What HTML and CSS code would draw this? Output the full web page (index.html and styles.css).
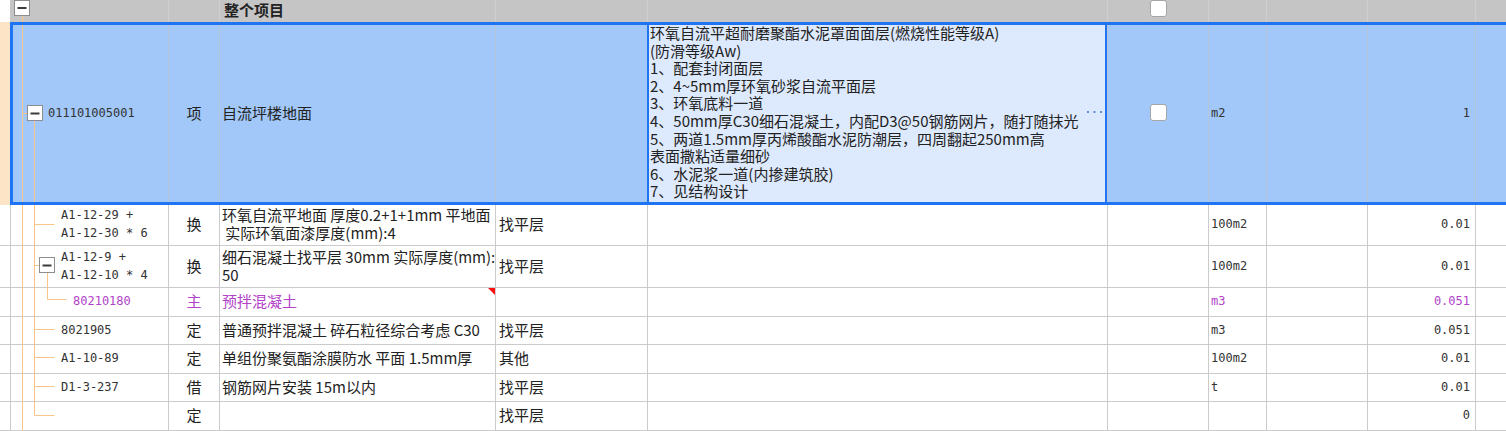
FILE: index.html
```html
<!DOCTYPE html>
<html lang="zh-CN">
<head>
<meta charset="utf-8">
<title>整个项目</title>
<link rel="stylesheet" href="styles.css">
</head>
<body>
<div class="sheet">
  <div class="row head">
    <div class="c c0"></div>
    <div class="c c1"></div>
    <div class="c c2"></div>
    <div class="c c3"><span class="title">整个项目</span></div>
    <div class="c c4"></div>
    <div class="c c5"></div>
    <div class="c c6"><span class="chk"></span></div>
    <div class="c c7"></div>
    <div class="c c8"></div>
    <div class="c c9"></div>
    <div class="c c10"></div>
  </div>

  <div class="row sel r1">
    <div class="c c0"></div>
    <div class="c c1 lv0"><span class="code">011101005001</span></div>
    <div class="c c2">项</div>
    <div class="c c3">自流坪楼地面</div>
    <div class="c c4"></div>
    <div class="c c5 desc-cell">
      <div class="desc">
        <div class="ln">环氧自流平超耐磨聚酯水泥罩面面层(燃烧性能等级A)</div>
        <div class="ln">(防滑等级Aw)</div>
        <div class="ln">1、配套封闭面层</div>
        <div class="ln">2、4~5mm厚环氧砂浆自流平面层</div>
        <div class="ln">3、环氧底料一道</div>
        <div class="ln">4、50mm厚C30细石混凝土，内配D3@50钢筋网片，随打随抹光</div>
        <div class="ln">5、两道1.5mm厚丙烯酸酯水泥防潮层，四周翻起250mm高</div>
        <div class="ln">表面撒粘适量细砂</div>
        <div class="ln">6、水泥浆一道(内掺建筑胶)</div>
        <div class="ln">7、见结构设计</div>
      </div>
      <svg class="more" width="15" height="3" viewBox="0 0 15 3"><rect x="0" y="0" width="2" height="2"/><rect x="6.5" y="0" width="2" height="2"/><rect x="13" y="0" width="2" height="2"/></svg>
    </div>
    <div class="c c6"><span class="chk"></span></div>
    <div class="c c7"><span class="num">m2</span></div>
    <div class="c c8"></div>
    <div class="c c9"><span class="num">1</span></div>
    <div class="c c10"></div>
  </div>

  <div class="row body r2">
    <div class="c c0"></div>
    <div class="c c1 lv1"><span class="code">A1-12-29 +<br>A1-12-30 * 6</span></div>
    <div class="c c2">换</div>
    <div class="c c3"><span class="ml">环氧自流平地面 厚度0.2+1+1mm 平地面<br>&nbsp;实际环氧面漆厚度(mm):4</span></div>
    <div class="c c4">找平层</div>
    <div class="c c5"></div>
    <div class="c c6"></div>
    <div class="c c7"><span class="num">100m2</span></div>
    <div class="c c8"></div>
    <div class="c c9"><span class="num">0.01</span></div>
    <div class="c c10"></div>
  </div>

  <div class="row body r3">
    <div class="c c0"></div>
    <div class="c c1 lv1"><span class="code">A1-12-9 +<br>A1-12-10 * 4</span></div>
    <div class="c c2">换</div>
    <div class="c c3"><span class="ml">细石混凝土找平层 30mm 实际厚度(mm):<br>50</span></div>
    <div class="c c4">找平层</div>
    <div class="c c5"></div>
    <div class="c c6"></div>
    <div class="c c7"><span class="num">100m2</span></div>
    <div class="c c8"></div>
    <div class="c c9"><span class="num">0.01</span></div>
    <div class="c c10"></div>
  </div>

  <div class="row body r4 pur">
    <div class="c c0"></div>
    <div class="c c1 lv2"><span class="code">80210180</span></div>
    <div class="c c2">主</div>
    <div class="c c3 flag">预拌混凝土</div>
    <div class="c c4"></div>
    <div class="c c5"></div>
    <div class="c c6"></div>
    <div class="c c7"><span class="num">m3</span></div>
    <div class="c c8"></div>
    <div class="c c9"><span class="num">0.051</span></div>
    <div class="c c10"></div>
  </div>

  <div class="row body r5">
    <div class="c c0"></div>
    <div class="c c1 lv1"><span class="code">8021905</span></div>
    <div class="c c2">定</div>
    <div class="c c3">普通预拌混凝土 碎石粒径综合考虑 C30</div>
    <div class="c c4">找平层</div>
    <div class="c c5"></div>
    <div class="c c6"></div>
    <div class="c c7"><span class="num">m3</span></div>
    <div class="c c8"></div>
    <div class="c c9"><span class="num">0.051</span></div>
    <div class="c c10"></div>
  </div>

  <div class="row body r6">
    <div class="c c0"></div>
    <div class="c c1 lv1"><span class="code">A1-10-89</span></div>
    <div class="c c2">定</div>
    <div class="c c3">单组份聚氨酯涂膜防水 平面 1.5mm厚</div>
    <div class="c c4">其他</div>
    <div class="c c5"></div>
    <div class="c c6"></div>
    <div class="c c7"><span class="num">100m2</span></div>
    <div class="c c8"></div>
    <div class="c c9"><span class="num">0.01</span></div>
    <div class="c c10"></div>
  </div>

  <div class="row body r7">
    <div class="c c0"></div>
    <div class="c c1 lv1"><span class="code">D1-3-237</span></div>
    <div class="c c2">借</div>
    <div class="c c3">钢筋网片安装 15m以内</div>
    <div class="c c4">找平层</div>
    <div class="c c5"></div>
    <div class="c c6"></div>
    <div class="c c7"><span class="num">t</span></div>
    <div class="c c8"></div>
    <div class="c c9"><span class="num">0.01</span></div>
    <div class="c c10"></div>
  </div>

  <div class="row body r8">
    <div class="c c0"></div>
    <div class="c c1 lv1"></div>
    <div class="c c2">定</div>
    <div class="c c3"></div>
    <div class="c c4">找平层</div>
    <div class="c c5"></div>
    <div class="c c6"></div>
    <div class="c c7"></div>
    <div class="c c8"></div>
    <div class="c c9"><span class="num">0</span></div>
    <div class="c c10"></div>
  </div>

  <svg class="tree" width="170" height="431" viewBox="0 0 170 431">
    <g class="lines">
      <line x1="22.5" y1="16" x2="22.5" y2="431"/>
      <line x1="22.5" y1="113.5" x2="27.5" y2="113.5"/>
      <line x1="34.5" y1="121" x2="34.5" y2="415.5"/>
      <line x1="34.5" y1="224.5" x2="54.5" y2="224.5"/>
      <line x1="34.5" y1="265.5" x2="39.5" y2="265.5"/>
      <line x1="47.5" y1="273" x2="47.5" y2="299.5"/>
      <line x1="47.5" y1="299.5" x2="66.5" y2="299.5"/>
      <line x1="34.5" y1="329.5" x2="54.5" y2="329.5"/>
      <line x1="34.5" y1="357.5" x2="54.5" y2="357.5"/>
      <line x1="34.5" y1="386.5" x2="54.5" y2="386.5"/>
      <line x1="34.5" y1="415.5" x2="54.5" y2="415.5"/>
    </g>
    <g class="box">
      <rect x="14.5" y="0.5" width="15" height="15"/>
      <rect x="27.5" y="105.5" width="15" height="15"/>
      <rect x="39.5" y="257.5" width="15" height="15"/>
    </g>
    <g class="minus">
      <rect x="17.5" y="7" width="9" height="2"/>
      <rect x="30.5" y="112.5" width="9" height="2"/>
      <rect x="42.5" y="264.5" width="9" height="2"/>
    </g>
  </svg>
</div>
</body>
</html>
```

FILE: styles.css
```css
* { box-sizing: border-box; }
html, body { margin: 0; padding: 0; background: #fff; overflow: hidden; }
body {
  width: 1506px;
  height: 431px;
  font-family: "Noto Sans CJK SC", "Noto Sans", sans-serif;
  font-size: 15px;
  color: #222;
}
.sheet { position: relative; width: 1535px; }

.row {
  display: grid;
  grid-template-columns: 10px 158px 51px 276px 152px 460px 101px 58px 101px 108px 60px;
}
.c {
  display: flex;
  align-items: center;
  border-left: 1px solid #cbcbcb;
  overflow: hidden;
  white-space: nowrap;
  min-width: 0;
  line-height: 18px;
  padding-bottom: 2px;
}
.c0 { border-left: none; }

/* header */
.head { height: 22px; background: #c5c5c5; }
.head .c { align-items: flex-start; padding-bottom: 0; border-left-color: #cfcfcf; }
.head .c0 { background: #fff; }
.head .c1 { border-left: none; }
.title { font-weight: 700; padding-left: 2px; line-height: 20px; }

/* selected row */
.sel { position: relative; height: 183px; background: #a1c8f9; }
.sel::after {
  content: "";
  position: absolute;
  left: 10px;
  top: 0;
  right: 0;
  bottom: 0;
  border: 3px solid #1f74f4;
  border-right: none;
  z-index: 2;
  pointer-events: none;
}
.sel .c { border-left-color: #b6c6da; padding-bottom: 2px; }
.sel .c0 { background: #fde4c6; }
.desc-cell {
  background: #dde9fc;
  border-left: 2px solid #1f74f4 !important;
  border-right: 2px solid #1f74f4;
  padding-left: 1px;
}
.desc { align-self: flex-start; padding-top: 2px; }
.ln { height: 17.6px; line-height: 17.6px; }
.more { margin-left: auto; margin-right: 3px; fill: #5b8fd8; align-self: center; }

/* body rows */
.body { border-bottom: 1px solid #cbcbcb; background: #fff; }
.r2 { height: 41px; }
.r3 { height: 42px; }
.r4 { height: 29px; }
.r5 { height: 28px; }
.r6 { height: 29px; }
.r7 { height: 28px; }
.r8 { height: 29px; }

.pur, .pur .code, .pur .num { color: #b243c9; }

.c1.lv0 { padding-left: 37px; }
.c1.lv1 { padding-left: 50px; }
.c1.lv2 { padding-left: 62px; }
.c2 { justify-content: center; }
.c3 { padding-left: 2px; }
.c4 { padding-left: 3px; }
.c7 { padding-left: 2px; }
.c9 { justify-content: flex-end; padding-right: 5px; }
.c6 { justify-content: center; }

.code, .num {
  font-family: "DejaVu Sans Mono", "Liberation Mono", monospace;
  font-size: 12px;
  line-height: 18px;
  color: #333;
}
.ml { line-height: 18px; }

.flag { position: relative; }
.flag::after {
  content: "";
  position: absolute;
  top: 0;
  right: 0;
  border-top: 7px solid #ff1010;
  border-left: 7px solid transparent;
}

.chk {
  display: block;
  width: 17px;
  height: 17px;
  border: 1px solid #a5a5a5;
  border-radius: 3px;
  background: #fff;
}

/* tree guide overlay */
.tree { position: absolute; left: 0; top: 0; z-index: 1; pointer-events: none; }
.tree .lines line { stroke: #f8c68a; stroke-width: 1; }
.tree .box rect { fill: #fff; stroke: #8e8e8e; stroke-width: 1; }
.tree .minus rect { fill: #3c3c3c; }
```
